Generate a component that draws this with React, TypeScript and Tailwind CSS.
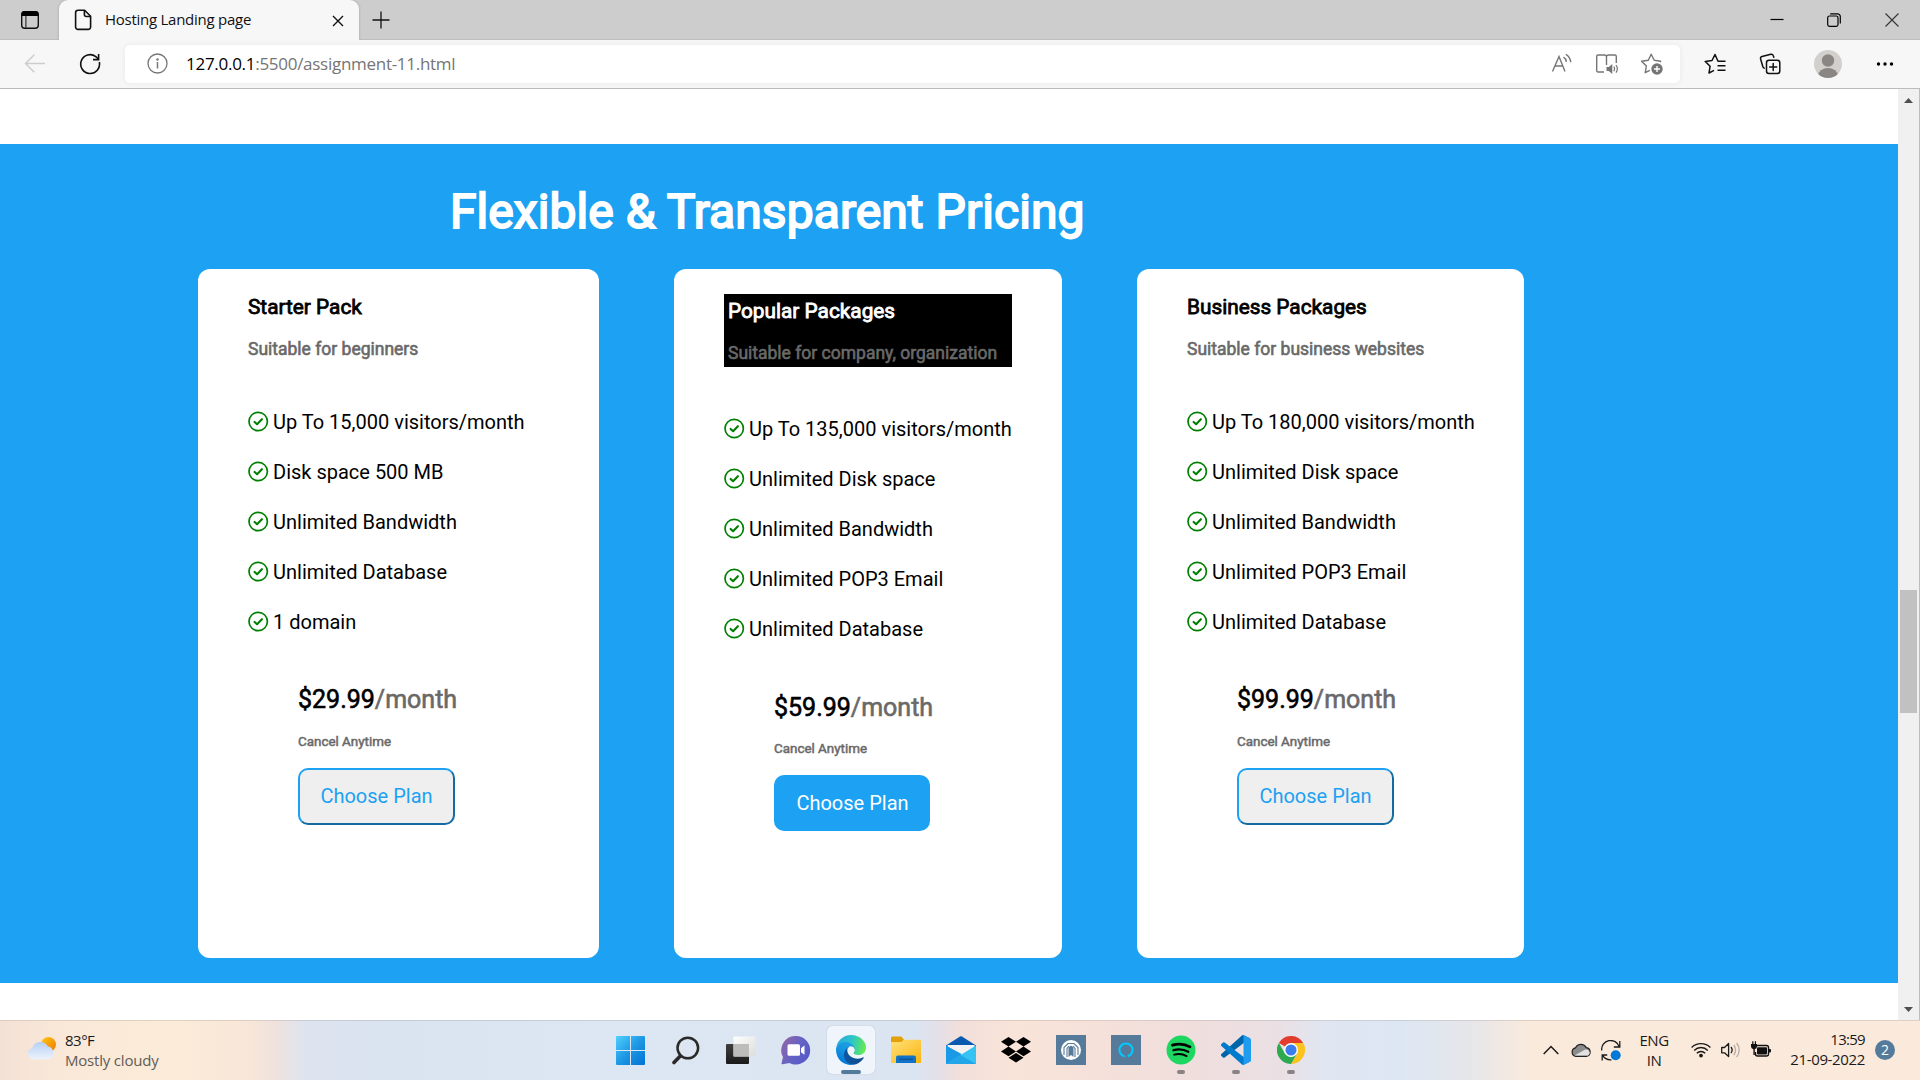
import React from 'react';

type Plan = {
  name: string;
  note: string;
  features: string[];
  price: string;
  popular?: boolean;
  width: string;
};

const plans: Plan[] = [
  {
    name: 'Starter Pack',
    note: 'Suitable for beginners',
    features: ['Up To 15,000 visitors/month', 'Disk space 500 MB', 'Unlimited Bandwidth', 'Unlimited Database', '1 domain'],
    price: '$29.99',
    width: 'w-[401px]',
  },
  {
    name: 'Popular Packages',
    note: 'Suitable for company, organization',
    features: ['Up To 135,000 visitors/month', 'Unlimited Disk space', 'Unlimited Bandwidth', 'Unlimited POP3 Email', 'Unlimited Database'],
    price: '$59.99',
    popular: true,
    width: 'w-[388px]',
  },
  {
    name: 'Business Packages',
    note: 'Suitable for business websites',
    features: ['Up To 180,000 visitors/month', 'Unlimited Disk space', 'Unlimited Bandwidth', 'Unlimited POP3 Email', 'Unlimited Database'],
    price: '$99.99',
    width: 'w-[387px]',
  },
];

function CheckCircle() {
  return (
    <svg width="21" height="21" viewBox="0 0 21 21" fill="none" stroke="#008000" strokeWidth="1.7" strokeLinecap="round" strokeLinejoin="round" className="-mt-[2px] shrink-0">
      <circle cx="10.2" cy="10.5" r="9.2" />
      <path d="M6.6 10.9 9.1 13.2 13.900 8.200" strokeWidth="2.1" />
    </svg>
  );
}

function PlanCard({ plan }: { plan: Plan }) {
  return (
    <article className={`${plan.width} h-[689px] shrink-0 rounded-[12px] bg-white pt-[25px] pl-[50px] pr-[49px]`}>
      {plan.popular ? (
        <header className="h-[73px] w-[288px] bg-black pt-[5px] pl-[4px]">
          <h3 className="h-[25px] text-[20.8px] leading-[25px] text-white [-webkit-text-stroke:0.8px_white]">{plan.name}</h3>
          <p className="mt-[17px] text-[17.5px] leading-[24px] text-[#696969] [-webkit-text-stroke:0.6px_#696969]">{plan.note}</p>
        </header>
      ) : (
        <header className="h-[67px] pt-px">
          <h3 className="h-[25px] text-[20.8px] leading-[25px] text-black [-webkit-text-stroke:0.8px_black]">{plan.name}</h3>
          <p className="mt-[17px] text-[17.5px] leading-[24px] text-[#696969] [-webkit-text-stroke:0.6px_#696969]">{plan.note}</p>
        </header>
      )}
      <ul className={plan.popular ? 'mt-[37px]' : 'mt-[36px]'}>
        {plan.features.map((f) => (
          <li key={f} className="flex h-[50px] items-center gap-[4px] whitespace-nowrap text-[20px] text-black">
            <CheckCircle />
            <span>{f}</span>
          </li>
        ))}
      </ul>
      <div className={plan.popular ? 'mt-[39px] pl-[50px]' : 'mt-[38px] pl-[50px]'}>
        <p className="text-[25px] leading-[30px] text-black [-webkit-text-stroke:0.6px_black]">
          {plan.price}
          <span className="text-[#696969] [-webkit-text-stroke:0.6px_#696969]">/month</span>
        </p>
        <p className={plan.popular ? 'mt-[18px] text-[13.4px] leading-[16px] text-[#696969] [-webkit-text-stroke:0.5px_#696969]' : 'mt-[19px] text-[13.4px] leading-[16px] text-[#696969] [-webkit-text-stroke:0.5px_#696969]'}>
          Cancel Anytime
        </p>
        {plan.popular ? (
          <button className="mt-[18px] block h-[56px] w-[156px] rounded-[10px] bg-[#1da1f2] pl-px text-[20px] text-white">Choose Plan</button>
        ) : (
          <button className="mt-[18px] block h-[57px] w-[157px] rounded-[10px] border-2 border-t-[#1da1f2] border-r-[#136ba1] border-b-[#136ba1] border-l-[#1da1f2] bg-[#efefef] pb-[2px] text-[20px] text-[#1da1f2]">
            Choose Plan
          </button>
        )}
      </div>
    </article>
  );
}

function TitleBar() {
  return (
    <div className="flex h-[40px] bg-[#cdcdcd]">
      <div className="flex w-[59px] items-center justify-center border-b border-[#bdbdbd]">
        <svg width="20" height="20" viewBox="0 0 20 20">
          <rect x="1.7" y="1.7" width="16.6" height="16.6" rx="3" fill="none" stroke="#111" strokeWidth="1.4" />
          <path d="M1.5 6V4a3 3 0 0 1 3-3h11a3 3 0 0 1 3 3v2z" fill="#000" />
          <path d="M5.9 6v12" stroke="#333" strokeWidth="1.2" />
        </svg>
      </div>
      <div className="flex w-[300px] items-center rounded-t-[9px] bg-[#f7f7f7] pl-[15px] shadow-[0_0_3px_rgba(0,0,0,0.2)]">
        <svg width="18" height="22" viewBox="0 0 18 22" fill="none" stroke="#111" strokeWidth="1.6" strokeLinejoin="round">
          <path d="M4 1.3h6.6l6 6V18a2.4 2.4 0 0 1-2.4 2.4H4A2.4 2.4 0 0 1 1.6 18V3.700A2.4 2.4 0 0 1 4 1.300z" />
          <path d="M10.400 1.500v4a2 2 0 0 0 2 2h4.200" />
        </svg>
        <span className="-mt-[2px] ml-[13px] w-[227px] text-[15px] tracking-[-0.26px] text-[#111]">Hosting Landing page</span>
        <svg className="mt-px" width="12" height="12" viewBox="0 0 12 12" stroke="#111" strokeWidth="1.4">
          <path d="M1 1l10 10M11 1 1 11" />
        </svg>
      </div>
      <div className="flex flex-1 items-center border-b border-[#bdbdbd] pl-[13px]">
        <svg width="18" height="18" viewBox="0 0 18 18" stroke="#111" strokeWidth="1.300">
          <path d="M9 .5v17M.5 9h17" />
        </svg>
        <div className="ml-auto flex items-center pr-[21px]">
          <svg width="14" height="14" viewBox="0 0 14 14" stroke="#000" strokeWidth="1.200"><path d="M.5 6.500h13" /></svg>
          <svg className="ml-[43px]" width="14" height="14" viewBox="0 0 14 14" fill="none" stroke="#000" strokeWidth="1.200">
            <rect x=".7" y="3" width="10.300" height="10.300" rx="1.800" />
            <path d="M3.200.8h7.300a2.800 2.800 0 0 1 2.800 2.800v7" />
          </svg>
          <svg className="ml-[44px]" width="14" height="14" viewBox="0 0 14 14" stroke="#333" strokeWidth="1.100"><path d="M.5.500l13 13M13.500.500l-13 13" /></svg>
        </div>
      </div>
    </div>
  );
}

function Toolbar() {
  return (
    <div className="flex h-[49px] items-center border-b border-[#bcbcbc] bg-[#f7f7f7]">
      <svg className="ml-[24px]" width="22" height="22" viewBox="0 0 22 22" fill="none" stroke="#cdcdcd" strokeWidth="1.500">
        <path d="M21 10.500H1.500M10.300 1.800 1.500 10.500l8.800 8.700" />
      </svg>
      <svg className="ml-[33px]" width="22" height="22" viewBox="0 0 22 22" fill="none" stroke="#111" strokeWidth="1.600">
        <path d="M20.300 9A9.400 9.400 0 1 1 16.800 3.600L19.400 6" />
        <path d="M19.600 1v5.600H14" />
      </svg>
      <div className="-mt-px ml-[24px] flex h-[38px] w-[1555px] items-center rounded-[5px] bg-white pl-[22px] pr-[16px] shadow-[0_0_6px_rgba(0,0,0,0.07)]">
        <svg width="22" height="22" viewBox="0 0 22 22" fill="none" stroke="#777" strokeWidth="1.300">
          <circle cx="10.500" cy="10.500" r="9.500" />
          <path d="M10.500 9v6.500" strokeWidth="1.500" />
          <circle cx="10.500" cy="6.500" r=".6" fill="#777" />
        </svg>
        <span className="ml-[17px] text-[17px] leading-[24px] tracking-[-0.28px] text-[#757575]">
          <span className="text-black">127.0.0.1</span>:5500/assignment-11.html
        </span>
        <div className="ml-auto flex items-center text-[#757575]">
          <svg width="22" height="22" viewBox="0 0 22 22" fill="none" stroke="currentColor" strokeWidth="1.400">
            <path d="M1.500 18.500 8 3.500l6 15M4 13h8" />
            <path d="M12.500 4.200c1.800 1 2.700 2.600 2.900 4.700M14.800 1.300c3 1.600 4.600 4.300 4.900 8" />
          </svg>
          <svg className="ml-[22px]" width="24" height="22" viewBox="0 0 24 22" fill="none" stroke="currentColor" strokeWidth="1.400">
            <path d="M9 19H3a1.300 1.300 0 0 1-1.300-1.300V3.200A1.300 1.300 0 0 1 3 2h6.500c1.200 0 2 .7 2 1.900V12M11.500 3.900c0-1.200.8-1.900 2-1.900H20a1.300 1.300 0 0 1 1.300 1.200V10" />
            <path d="M11.500 14h2.300l3.500-3v10l-3.500-3h-2.300z" fill="currentColor" stroke="none" />
            <path d="M18.800 13.500c.9 1.400.9 3.300 0 4.700M21 12c1.700 2.400 1.700 5.300 0 7.700" strokeWidth="1.200" />
          </svg>
          <svg className="ml-[21px] mt-px" width="24" height="24" viewBox="0 0 24 24" fill="none" stroke="currentColor" strokeWidth="1.400" strokeLinejoin="round">
            <path d="M20.300 10.300 20.600 9.200 14.200 8.300 11.200 2.200 8.300 8.300 1.600 9.200 6.400 14 5.200 20.700 9.800 18.400" />
            <circle cx="17" cy="17" r="5.700" fill="currentColor" stroke="none" />
            <path d="M17 14v6M14 17h6" stroke="#fff" />
          </svg>
        </div>
      </div>
      <div className="flex items-center pl-[23px] text-[#111]">
        <svg width="24" height="24" viewBox="0 0 24 24" fill="none" stroke="currentColor" strokeWidth="1.500" strokeLinejoin="round">
          <path d="M22.500 9.200H15L12 2.500 9 8.500 2.200 9.400 7.100 14.200 6 21 11 18.300M14.500 13.800h8M14.500 18.300h8" />
        </svg>
        <svg className="ml-[32px]" width="24" height="24" viewBox="0 0 24 24" fill="none" stroke="currentColor" strokeWidth="1.500" strokeLinecap="round">
          <rect x="7.500" y="8.300" width="13.300" height="13.300" rx="2.500" />
          <path d="M14.200 11.500v7M10.700 15h7" />
          <path d="M14.800 5.200 14.200 3.600a2 2 0 0 0-2.400-1.300L3 4.600a2 2 0 0 0-1.400 2.400l2.200 7.500a3 3 0 0 0 1.400 1.700" />
        </svg>
        <svg className="ml-[31px]" width="28" height="28" viewBox="0 0 28 28">
          <clipPath id="avatar"><circle cx="14" cy="14" r="14" /></clipPath>
          <g clipPath="url(#avatar)">
            <rect width="28" height="28" fill="#d2d0cd" />
            <circle cx="14" cy="10.500" r="6.200" fill="#8a8683" />
            <ellipse cx="14" cy="26" rx="10" ry="8" fill="#8a8683" />
          </g>
        </svg>
        <svg className="ml-[34px]" width="18" height="6" viewBox="0 0 18 6">
          <circle cx="2.500" cy="3" r="1.700" /><circle cx="9" cy="3" r="1.700" /><circle cx="15.500" cy="3" r="1.700" />
        </svg>
      </div>
    </div>
  );
}

function ScrollBar() {
  return (
    <div className="flex w-[22px] flex-col items-center border-r border-[#bdbdbd] bg-[#f0f0f0]">
      <svg className="mt-[9px]" width="9" height="5" viewBox="0 0 9 5"><path d="M0 5 4.500 0 9 5z" fill="#505050" /></svg>
      <div className="mt-[487px] h-[123px] w-[17px] bg-[#c1c1c1]" />
      <svg className="mt-auto mb-[8px]" width="9" height="5" viewBox="0 0 9 5"><path d="M0 0 4.500 5 9 0z" fill="#505050" /></svg>
    </div>
  );
}

function StartIcon() {
  return (
    <svg width="29" height="29" viewBox="0 0 29 29">
      <defs>
        <linearGradient id="win" gradientUnits="userSpaceOnUse" x1="0" y1="0" x2="29" y2="29">
          <stop offset="0" stopColor="#4fd0ff" /><stop offset=".5" stopColor="#1e98e4" /><stop offset="1" stopColor="#0072d4" />
        </linearGradient>
      </defs>
      <path d="M0 1a1 1 0 0 1 1-1h13v14H0zM15 0h13a1 1 0 0 1 1 1v13H15zM0 15h14v14H1a1 1 0 0 1-1-1zM15 15h14v13a1 1 0 0 1-1 1H15z" fill="url(#win)" />
    </svg>
  );
}

function SearchTaskIcon() {
  return (
    <svg width="28" height="29" viewBox="0 0 28 29" fill="none" stroke="#2b2a29">
      <circle cx="15.800" cy="12" r="10.300" strokeWidth="2.500" />
      <path d="M8.300 20 2 26.500" strokeWidth="3.600" strokeLinecap="round" />
    </svg>
  );
}

function TaskViewIcon() {
  return (
    <svg width="30" height="29" viewBox="0 0 30 29">
      <defs>
        <linearGradient id="tvd" x1="0" y1="0" x2="0" y2="1"><stop offset="0" stopColor="#3f3f3d" /><stop offset="1" stopColor="#1a1a1a" /></linearGradient>
        <linearGradient id="tvl" x1="0" y1="0" x2="1" y2="1"><stop offset="0" stopColor="#fff" /><stop offset="1" stopColor="#dcdcdc" /></linearGradient>
      </defs>
      <rect x="0" y="8" width="23" height="20" rx="1" fill="url(#tvd)" />
      <rect x="7.500" y=".500" width="22" height="20" rx="1" fill="url(#tvl)" />
      <path d="M7.500 8H23v12.500H7.500z" fill="#bdbdbb" />
    </svg>
  );
}

function ChatIcon() {
  return (
    <svg width="30" height="29" viewBox="0 0 30 29">
      <defs>
        <linearGradient id="chat" x1="0" y1="0.200" x2="1" y2="0.800"><stop offset="0" stopColor="#9166a8" /><stop offset=".5" stopColor="#6562c4" /><stop offset="1" stopColor="#5558c8" /></linearGradient>
      </defs>
      <path d="M15 0a14.200 14.200 0 0 1 0 28.400c-2.300 0-4.500-.5-6.400-1.500L1.500 28.300c-.7.1-1.100-.5-1-1.100L2 21A14.200 14.200 0 0 1 15 0z" fill="url(#chat)" />
      <rect x="6.500" y="8.300" width="12.500" height="11.500" rx="1.500" fill="#fff" />
      <path d="M20 12.200l3.500-2.700v9.300L20 16.200z" fill="#fff" />
    </svg>
  );
}

function EdgeIcon() {
  return (
    <svg width="30" height="30" viewBox="0 0 256 256">
      <defs>
        <linearGradient id="e1" x1="60" y1="177" x2="241" y2="177" gradientUnits="userSpaceOnUse"><stop offset="0" stopColor="#0c59a4" /><stop offset="1" stopColor="#114a8b" /></linearGradient>
        <linearGradient id="e2" x1="130" y1="90" x2="45" y2="240" gradientUnits="userSpaceOnUse"><stop offset="0" stopColor="#1b9de2" /><stop offset=".4" stopColor="#1595df" /><stop offset="1" stopColor="#0078d7" /></linearGradient>
        <linearGradient id="e3" x1="10" y1="60" x2="250" y2="110" gradientUnits="userSpaceOnUse"><stop offset="0" stopColor="#2aa9e0" /><stop offset=".5" stopColor="#2cc5c8" /><stop offset="1" stopColor="#66eb4f" /></linearGradient>
      </defs>
      <path fill="url(#e1)" d="M231 190.500c-3.400 1.800-6.900 3.400-10.500 4.700a101.900 101.900 0 0 1-35.900 6.500c-47.300 0-88.500-32.500-88.500-74.300a31.500 31.500 0 0 1 16.400-27.300c-42.800 1.800-53.800 46.400-53.800 72.500 0 73.900 68.100 81.400 82.800 81.400 7.900 0 19.800-2.300 27-4.600l1.300-.4a128.300 128.300 0 0 0 66.600-52.800 4 4 0 0 0-5.400-5.700z" />
      <path fill="url(#e2)" d="M105.700 241.400a79.200 79.200 0 0 1-22.700-21.300 80.700 80.700 0 0 1 29.500-120c3.100-1.500 8.500-4.100 15.600-4a32.400 32.400 0 0 1 25.700 13 31.900 31.900 0 0 1 6.300 18.700c0-.2 24.500-79.600-80-79.600C36.200 48.200.100 89.900.100 126.500a130 130 0 0 0 12.100 56A128 128 0 0 0 168.600 249.400a75.500 75.500 0 0 1-62.800-8z" />
      <path fill="url(#e3)" d="M152.300 148.900c-.8 1-3.300 2.500-3.300 5.700 0 2.600 1.700 5.200 4.800 7.300 14.400 10.100 41.700 8.700 41.800 8.700a59.900 59.900 0 0 0 30.500-8.300A61.800 61.800 0 0 0 256.500 109c.3-22.400-8-37.300-11.300-43.900C224 23.600 178.200 0 128.500 0a128 128 0 0 0-128 126.200c.5-36.500 36.800-66 80-66 3.500 0 23.500.3 42 10.100 16.300 8.500 24.900 18.800 30.800 29.100 6.200 10.600 7.300 24.100 7.300 29.500 0 5.300-2.700 13.300-8.300 20z" />
    </svg>
  );
}

function FolderIcon() {
  return (
    <svg width="30" height="28" viewBox="0 0 30 28">
      <defs>
        <linearGradient id="fold" x1="0" y1="0" x2="1" y2="1"><stop offset="0" stopColor="#ffe27a" /><stop offset="1" stopColor="#fbb40f" /></linearGradient>
      </defs>
      <path d="M0 2a1.500 1.500 0 0 1 1.500-1.500h8.700L13 3.500h-.5V8H0z" fill="#e3a008" />
      <path d="M0 6h10.500L13 3.800h16A1 1 0 0 1 30 5v22H0z" fill="url(#fold)" />
      <path d="M5 27v-5.500A2 2 0 0 1 7 19.500h16a2 2 0 0 1 2 2V27z" fill="#1173c6" />
      <path d="M8 23.200h14" stroke="#0c4f91" strokeWidth="1.200" />
    </svg>
  );
}

function MailIcon() {
  return (
    <svg width="30" height="28" viewBox="0 0 30 28">
      <path d="M0 9.500 14 .6a2 2 0 0 1 2 0L30 9.500V20H0z" fill="#0a5ab0" />
      <path d="M1.500 9h27v8L15 21 1.500 17z" fill="#f3f3f3" />
      <path d="M0 9.500 15.500 18 10 28H0z" fill="#1a9ae6" />
      <path d="M30 9.500 0 28h30z" fill="#35c3f3" />
      <path d="M14.500 19 30 28H0z" fill="#22a6e8" />
    </svg>
  );
}

function DropboxIcon() {
  return (
    <svg width="30" height="26" viewBox="0 0 30 26">
      <path d="M7.500 0 15 4.800 7.500 9.600 0 4.800zM22.500 0 30 4.800l-7.500 4.800L15 4.800zM0 14.400l7.500-4.800 7.500 4.800-7.500 4.800zM22.500 9.600l7.500 4.800-7.500 4.800-7.500-4.800zM7.500 20.800 15 16l7.500 4.800L15 25.600z" />
    </svg>
  );
}

function ShieldTile() {
  return (
    <div className="flex size-[30px] items-center justify-center bg-[#567a99]">
      <svg width="20" height="20" viewBox="0 0 20 20">
        <circle cx="10" cy="10" r="10" fill="#fff" />
        <path d="M3 15V7.500L7 3.500h6l4 4V15M6 17V8.500L8 6M14 17V8.500L12 6" fill="none" stroke="#567a99" strokeWidth="1.100" />
        <path d="M7.500 7.500 10 5.500l2.500 2V17L10 15l-2.500 2z" fill="#567a99" />
      </svg>
    </div>
  );
}

function AlexaTile() {
  return (
    <div className="flex size-[30px] items-center justify-center bg-[#567a99]">
      <svg width="16" height="16" viewBox="0 0 16 16" fill="none" stroke="#00caff" strokeWidth="2">
        <path d="M6.300 14.200a6.500 6.500 0 1 1 3.400 0" />
        <path d="M6.300 14.200c-.2.500 1 1 1.300.9" strokeWidth="1" />
      </svg>
    </div>
  );
}

function SpotifyIcon() {
  return (
    <svg width="30" height="30" viewBox="0 0 30 30" fill="none" stroke="#000" strokeLinecap="round">
      <circle cx="15" cy="15" r="14.500" fill="#1ed760" stroke="none" />
      <path d="M6.500 10.200c6-1.700 12.500-1.100 17.500 1.700" strokeWidth="2.800" />
      <path d="M7.500 15.200c5-1.400 10.500-.8 14.800 1.600" strokeWidth="2.300" />
      <path d="M8.200 19.700c4.300-1.100 8.700-.7 12.400 1.400" strokeWidth="1.900" />
    </svg>
  );
}

function VsCodeIcon() {
  return (
    <svg width="30" height="30" viewBox="0 0 100 100">
      <path fill="#0065a9" d="M96.500 10.800 75.900.9a6.200 6.200 0 0 0-7.100 1.200L1.300 63.600a4.200 4.200 0 0 0 0 6.200l5.500 5a4.200 4.200 0 0 0 5.400.2l81.200-61.600c2.700-2.100 6.600-.1 6.600 3.300v-.2c0-2.400-1.400-4.600-3.500-5.700z" />
      <path fill="#007acc" d="m96.500 89.200-20.600 9.900a6.200 6.200 0 0 1-7.100-1.200L1.300 36.400a4.200 4.200 0 0 1 0-6.200l5.500-5a4.200 4.200 0 0 1 5.400-.2l81.200 61.600c2.700 2.100 6.600.1 6.600-3.300v.2c0 2.400-1.400 4.600-3.500 5.700z" />
      <path fill="#1f9cf0" d="M75.900 99.100a6.200 6.200 0 0 1-7.100-1.200c2.300 2.300 6.200.7 6.200-2.600V4.700c0-3.300-3.900-4.900-6.200-2.600A6.200 6.200 0 0 1 75.900.9l20.600 9.900c2.200 1 3.500 3.200 3.500 5.600v67.200c0 2.400-1.400 4.600-3.500 5.600z" />
    </svg>
  );
}

function ChromeIcon() {
  return (
    <svg width="28" height="28" viewBox="0 0 48 48">
      <path fill="#e33b2e" d="M24 24 3.200 12a24 24 0 0 1 41.600 0z" />
      <path fill="#fcc31e" d="M24 12h20.800A24 24 0 0 1 24 48l10.400-18z" />
      <path fill="#2da94f" d="M3.200 12 13.600 30 24 36l10.400-6L24 48A24 24 0 0 1 3.200 12z" />
      <circle cx="24" cy="24" r="12" fill="#fff" />
      <circle cx="24" cy="24" r="9.500" fill="#3b7ded" />
    </svg>
  );
}

function TaskCell({ children, running, active }: { children: React.ReactNode; running?: boolean; active?: boolean }) {
  return (
    <div className="flex h-[60px] w-[55px] items-center justify-center">
      <div className={active ? 'relative flex size-[48px] items-center justify-center rounded-[5px] bg-[#f0f4fb] shadow-[0_0_1px_rgba(0,0,0,0.3)]' : 'relative flex size-[48px] items-center justify-center'}>
        {children}
        {active && <span className="absolute bottom-0 left-[14px] h-[4px] w-[20px] rounded-full bg-[#557b9c]" />}
        {running && <span className="absolute bottom-0 left-[20px] h-[4px] w-[8px] rounded-full bg-[#8a8383]" />}
      </div>
    </div>
  );
}

function Tray() {
  return (
    <div className="ml-auto flex h-full items-center pr-[25px] text-[15px] leading-[20px] text-[#1a1a1a]">
      <svg width="16" height="10" viewBox="0 0 16 10" fill="none" stroke="#1a1a1a" strokeWidth="1.500"><path d="M.7 9 8 1.500 15.300 9" /></svg>
      <svg className="ml-[12px]" width="20" height="14" viewBox="0 0 20 14">
        <path d="M5 13.300A4.300 4.300 0 0 1 4.600 4.800 6 6 0 0 1 15.300 4.600 4.400 4.400 0 0 1 15.500 13.300z" fill="#8b8b8b" stroke="#222" strokeWidth="1.200" />
        <path d="M3.500 12.400 13.800 6.800c2.500-.8 4.800.9 4.800 3.200 0 1.500-1 2.600-3 2.600H5z" fill="#e2e2e2" />
      </svg>
      <svg className="ml-[10px]" width="20" height="21" viewBox="0 0 20 21" fill="none" stroke="#1a1a1a" strokeWidth="1.300">
        <path d="M.7 10.500a9 9 0 0 1 17.500-3.800M18.800 1v6h-6M1.200 20.500v-5.500h5M1.500 15.200a9.500 9.500 0 0 0 9 4.600" />
        <circle cx="14.700" cy="15.300" r="5" fill="#0078d7" stroke="none" />
      </svg>
      <div className="ml-[16px] w-[34px] text-center tracking-[-0.45px]"><p>ENG</p><p>IN</p></div>
      <svg className="ml-[20px]" width="20" height="16" viewBox="0 0 20 16" fill="none" stroke="#1a1a1a" strokeWidth="1.400">
        <path d="M.6 5.600a13.200 13.200 0 0 1 18.800 0M3.200 8.400a9.500 9.500 0 0 1 13.600 0M5.800 11.200a5.900 5.900 0 0 1 8.400 0" />
        <circle cx="10" cy="13.600" r="1.900" fill="#1a1a1a" stroke="none" />
      </svg>
      <svg className="ml-[10px]" width="20" height="16" viewBox="0 0 20 16" fill="none" stroke="#1a1a1a" strokeWidth="1.300" strokeLinejoin="round">
        <path d="M.7 5.500h2.800L7.600 1.500v13L3.500 10.800H.7zM10 5c1.300 1.700 1.300 4.300 0 6" />
        <path d="M12.800 3c2.300 2.800 2.300 7.200 0 10M15.600 1c3.400 4 3.400 10 0 14" stroke="#b8aca3" />
      </svg>
      <svg className="ml-[10px] -mt-[2px]" width="20" height="16" viewBox="0 0 20 16">
        <path d="M6 4.500h9.500a2 2 0 0 1 2 2v6.500a2 2 0 0 1-2 2H6.500a2 2 0 0 1-2-2V11" fill="none" stroke="#111" strokeWidth="1.400" />
        <rect x="6" y="6.200" width="10" height="7.200" rx=".8" fill="#111" />
        <path d="M18 8h1a1 1 0 0 1 1 1v1.500a1 1 0 0 1-1 1h-1z" fill="#111" />
        <path d="M0 3h6v2.500a2.700 2.700 0 0 1-2.200 2.700V14H2.400V8.200A2.700 2.700 0 0 1 0 5.500zM1.200.3h1.200V3H1.200zM3.800.3H5V3H3.800z" fill="#111" />
      </svg>
      <div className="ml-[14px] -mt-[2px] w-[80px] text-right tracking-[-0.35px]"><p className="tracking-[-0.7px]">13:59</p><p>21-09-2022</p></div>
      <div className="ml-[10px] flex size-[20px] items-center justify-center rounded-full bg-[#557b9c] text-[14px] text-white">2</div>
    </div>
  );
}

function Taskbar() {
  return (
    <div className="flex h-[60px] w-full bg-[linear-gradient(90deg,#f4e1d6_0px,#fae9d8_70px,#fbebd8_180px,#f8e6d8_250px,#eee2df_278px,#dde4ef_305px,#dae3f0_380px,#dde7f3_620px,#dbe5f2_915px,#e4e0e8_938px,#f2dfda_960px,#f8e4d8_1015px,#f5e1da_1100px,#f0dedd_1190px,#eae0e4_1280px,#e0e6f2_1325px,#dde7f3_1400px,#e6e6ea_1470px,#faeadc_1530px,#fbeadc_1920px)] shadow-[inset_0_1px_0_rgba(120,110,110,0.2)]">
      <div className="flex w-[603px] items-center pl-[27px]">
        <svg className="-mt-[3px]" width="29" height="23" viewBox="0 0 29 23">
          <defs>
            <linearGradient id="sun" x1="0" y1="0" x2="1" y2="1"><stop offset="0" stopColor="#ffc814" /><stop offset="1" stopColor="#f07800" /></linearGradient>
            <linearGradient id="cl" x1="0" y1="0" x2="0" y2="1"><stop offset="0" stopColor="#b6d0f4" /><stop offset="1" stopColor="#eef3fb" /></linearGradient>
          </defs>
          <circle cx="21.500" cy="7.500" r="7.500" fill="url(#sun)" />
          <path d="M6 22.500A5.700 5.700 0 0 1 5.200 11.300a8.400 8.400 0 0 1 15.500-2A6.800 6.800 0 0 1 21.500 22.500z" fill="url(#cl)" />
        </svg>
        <div className="ml-[9px] text-[15px] leading-[20px] tracking-[-0.2px]">
          <p className="tracking-[-0.5px] text-[#1a1a1a]">83°F</p>
          <p className="text-[#605c58]">Mostly cloudy</p>
        </div>
      </div>
      <div className="flex">
        <TaskCell><StartIcon /></TaskCell>
        <TaskCell><SearchTaskIcon /></TaskCell>
        <TaskCell><TaskViewIcon /></TaskCell>
        <TaskCell><ChatIcon /></TaskCell>
        <TaskCell active><EdgeIcon /></TaskCell>
        <TaskCell><FolderIcon /></TaskCell>
        <TaskCell><MailIcon /></TaskCell>
        <TaskCell><DropboxIcon /></TaskCell>
        <TaskCell><ShieldTile /></TaskCell>
        <TaskCell><AlexaTile /></TaskCell>
        <TaskCell running><SpotifyIcon /></TaskCell>
        <TaskCell running><VsCodeIcon /></TaskCell>
        <TaskCell running><ChromeIcon /></TaskCell>
      </div>
      <Tray />
    </div>
  );
}

export default function App() {
  return (
    <div className="flex h-[1080px] w-[1920px] flex-col overflow-hidden bg-white font-['Open_Sans','Noto_Sans',sans-serif]">
      <TitleBar />
      <Toolbar />
      <div className="flex h-[931px]">
        <main className="w-[1898px] bg-white pt-[55px] font-['Roboto',sans-serif]">
          <section className="h-[839px] bg-[#1da1f2] pt-[38px] pl-[198px]">
            <h1 className="pl-[252px] text-[48px] leading-[60px] tracking-[0.07px] text-white [-webkit-text-stroke:1.9px_white]">Flexible &amp; Transparent Pricing</h1>
            <div className="mt-[27px] flex gap-[75px]">
              {plans.map((p) => (
                <PlanCard key={p.name} plan={p} />
              ))}
            </div>
          </section>
        </main>
        <ScrollBar />
      </div>
      <Taskbar />
    </div>
  );
}
